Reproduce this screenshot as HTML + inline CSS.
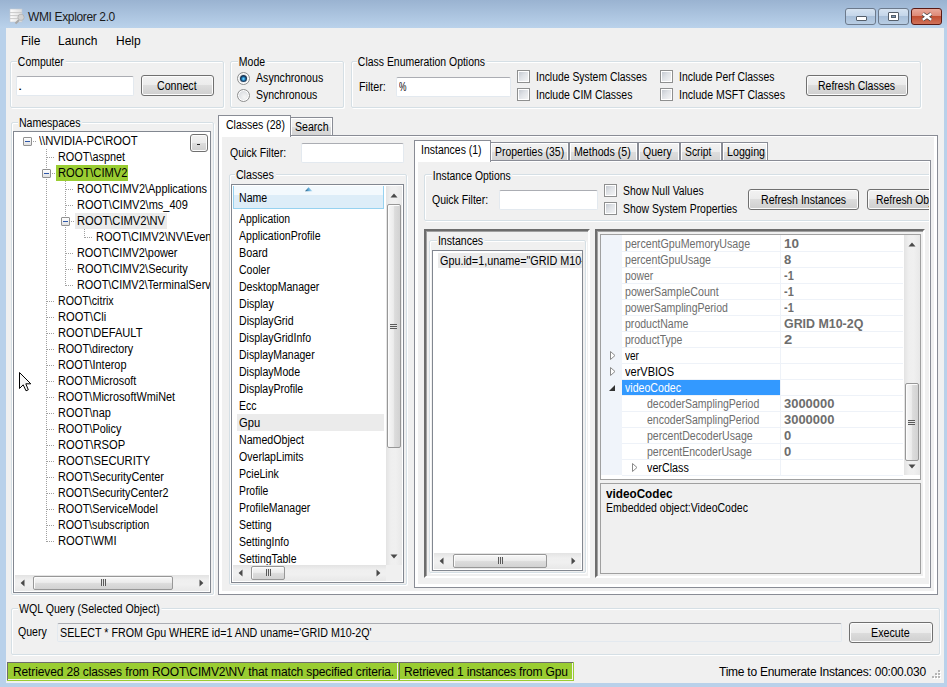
<!DOCTYPE html>
<html><head><meta charset="utf-8">
<style>
*{box-sizing:border-box;margin:0;padding:0}
html,body{width:947px;height:687px;overflow:hidden;background:#b9d1ea}
body{position:relative;font-family:"Liberation Sans",sans-serif;font-size:11px;color:#000}
.a{position:absolute}
.t{position:absolute;white-space:nowrap;line-height:13px}
.gb{position:absolute;border:1px solid #d5dfe5;border-radius:2px;box-shadow:inset 1px 1px 0 #fff,1px 1px 0 #fff}
.gl{position:absolute;background:#f0f0f0;padding:0 2px 0 1px;white-space:nowrap;line-height:13px}
.tb{position:absolute;background:#fff;border:1px solid #e3e9ef;border-top-color:#abadb3;border-radius:2px}
.btn{position:absolute;border:1px solid #707070;border-radius:3px;background:linear-gradient(#f2f2f2 0,#ebebeb 50%,#dddddd 50%,#cfcfcf 100%);box-shadow:inset 0 0 0 1px #fcfcfc}
.cb{position:absolute;width:13px;height:13px;border:1px solid #8e8f8f;background:linear-gradient(135deg,#bfc4cc,#dfe2e6 45%,#f7f7f7);box-shadow:inset 0 0 0 1px #fff}
.rd{position:absolute;width:13px;height:13px;border-radius:50%;border:1px solid #8e8f8f;background:radial-gradient(circle at 60% 65%,#f6f6f6 0,#e2e4e7 50%,#cdd0d4 100%);box-shadow:inset 0 0 0 1px #fff}
.sunk{position:absolute;border:1px solid #828790;background:#fff}
.tab{position:absolute;border:1px solid #898c95;border-bottom:none;background:linear-gradient(#f3f3f3 0,#ececec 50%,#dedede 50%,#d3d3d3 100%);box-shadow:inset 1px 1px 0 #fff,inset -1px 0 0 #fff}
</style></head><body>
<div class="a" style="left:0px;top:0px;width:947px;height:28px;background:linear-gradient(#9ab3d1,#bad2eb)"></div>
<div class="a" style="left:6px;top:28px;width:938px;height:655px;background:#f0f0f0"></div>
<svg class="a" style="left:9px;top:8px" width="16" height="17" viewBox="0 0 16 17">
<defs><linearGradient id="ig" x1="0" x2="1"><stop offset="0" stop-color="#fdfdfd"/><stop offset="1" stop-color="#dedede"/></linearGradient></defs>
<rect x="1" y="1" width="12" height="13" fill="url(#ig)" stroke="#c4cad2" stroke-width="0.6"/>
<path d="M1 4.6H13M1 7.6H13M1 10.6H13" stroke="#c9c9c9" stroke-width="1"/>
<path d="M10 12L6.5 15.5" stroke="#a8a8a8" stroke-width="2"/>
<circle cx="12" cy="9.3" r="3.1" fill="#d2d2d2" stroke="#b0b0b0" stroke-width="0.8"/></svg>
<div class="t" style="left:28px;top:10px;font-size:12px;line-height:14px;letter-spacing:-0.36px;color:#1a1a1a">WMI Explorer 2.0</div>
<div class="a" style="left:845px;top:8px;width:31px;height:17px;border:1px solid #6c7a8c;border-radius:3px;background:linear-gradient(#d6e3f1 0,#c4d6ea 45%,#a9c0da 50%,#b8cde3 100%)"></div>
<div class="a" style="left:878px;top:8px;width:31px;height:17px;border:1px solid #6c7a8c;border-radius:3px;background:linear-gradient(#d6e3f1 0,#c4d6ea 45%,#a9c0da 50%,#b8cde3 100%)"></div>
<div class="a" style="left:856px;top:16px;width:11px;height:5px;background:#fff;border:1px solid #555f6b;border-radius:1px"></div>
<div class="a" style="left:888px;top:12px;width:11px;height:9px;background:#fff;border:1px solid #555f6b;border-radius:1px"></div>
<div class="a" style="left:891px;top:15px;width:5px;height:3px;background:#7f9ab8;border:1px solid #555f6b"></div>
<div class="a" style="left:911px;top:8px;width:31px;height:17px;border:1px solid #5a1a14;border-radius:3px;background:linear-gradient(#e9a99a 0,#dd8a77 45%,#c14f32 50%,#d0715a 100%)"></div>
<svg class="a" style="left:919px;top:11px" width="16" height="12" viewBox="0 0 16 12"><path d="M3.8 2.8L12.2 8.8M12.2 2.8L3.8 8.8" stroke="#3d3d3d" stroke-width="3.8" fill="none"/><path d="M3.8 2.8L12.2 8.8M12.2 2.8L3.8 8.8" stroke="#fff" stroke-width="2.4" fill="none"/></svg>
<div class="t" style="left:21px;top:34px;font-size:12px;line-height:14px">File</div>
<div class="t" style="left:58px;top:34px;font-size:12px;line-height:14px">Launch</div>
<div class="t" style="left:116px;top:34px;font-size:12px;line-height:14px">Help</div>
<div class="gb" style="left:10px;top:61px;width:214px;height:47px;"></div>
<div class="gl" style="left:17.00px;top:55px;font-size:12px;line-height:14px;transform:scaleX(0.8701);transform-origin:0 0">Computer</div>
<div class="tb" style="left:16px;top:76px;width:118px;height:20px;"></div>
<div class="t" style="left:18.00px;top:79px;font-size:12px;line-height:14px;transform:scaleX(1.2770);transform-origin:0 0">.</div>
<div class="btn" style="left:141px;top:75px;width:73px;height:21px;"></div>
<div class="t" style="left:157.00px;top:79px;font-size:12px;line-height:14px;transform:scaleX(0.8864);transform-origin:0 0">Connect</div>
<div class="gb" style="left:230px;top:61px;width:114px;height:47px;"></div>
<div class="gl" style="left:238.00px;top:55px;font-size:12px;line-height:14px;transform:scaleX(0.8727);transform-origin:0 0">Mode</div>
<div class="rd" style="left:237px;top:72px;width:13px;height:13px;"></div>
<div class="rd" style="left:237px;top:89px;width:13px;height:13px;"></div>
<div class="a" style="left:240px;top:75px;width:7px;height:7px;border-radius:50%;background:radial-gradient(circle closest-side at 50% 55%,#8ee2ff 0,#2d9ad8 40%,#1a4b78 75%,#17324f 100%)"></div>
<div class="t" style="left:256.00px;top:71px;font-size:12px;line-height:14px;transform:scaleX(0.8839);transform-origin:0 0">Asynchronous</div>
<div class="t" style="left:256.00px;top:88px;font-size:12px;line-height:14px;transform:scaleX(0.8760);transform-origin:0 0">Synchronous</div>
<div class="gb" style="left:351px;top:61px;width:570px;height:47px;"></div>
<div class="gl" style="left:357.00px;top:55px;font-size:12px;line-height:14px;transform:scaleX(0.8704);transform-origin:0 0">Class Enumeration Options</div>
<div class="t" style="left:359.00px;top:80px;font-size:12px;line-height:14px;transform:scaleX(0.8948);transform-origin:0 0">Filter:</div>
<div class="tb" style="left:396px;top:77px;width:115px;height:20px;"></div>
<div class="t" style="left:399.00px;top:80px;font-size:12px;line-height:14px;transform:scaleX(0.7000);transform-origin:0 0">%</div>
<div class="cb" style="left:517px;top:70px;width:13px;height:13px;"></div>
<div class="t" style="left:536.00px;top:70px;font-size:12px;line-height:14px;transform:scaleX(0.8662);transform-origin:0 0">Include System Classes</div>
<div class="cb" style="left:517px;top:88px;width:13px;height:13px;"></div>
<div class="t" style="left:536.00px;top:88px;font-size:12px;line-height:14px;transform:scaleX(0.8767);transform-origin:0 0">Include CIM Classes</div>
<div class="cb" style="left:660px;top:70px;width:13px;height:13px;"></div>
<div class="t" style="left:679.00px;top:70px;font-size:12px;line-height:14px;transform:scaleX(0.8674);transform-origin:0 0">Include Perf Classes</div>
<div class="cb" style="left:660px;top:88px;width:13px;height:13px;"></div>
<div class="t" style="left:679.00px;top:88px;font-size:12px;line-height:14px;transform:scaleX(0.8796);transform-origin:0 0">Include MSFT Classes</div>
<div class="btn" style="left:806px;top:75px;width:102px;height:21px;"></div>
<div class="t" style="left:817.94px;top:79px;font-size:12px;line-height:14px;transform:scaleX(0.8750);transform-origin:0 0">Refresh Classes</div>
<div class="gb" style="left:11px;top:122px;width:203px;height:473px;"></div>
<div class="gl" style="left:18.00px;top:116px;font-size:12px;line-height:14px;transform:scaleX(0.8798);transform-origin:0 0">Namespaces</div>
<div class="sunk" style="left:13px;top:131px;width:198px;height:462px;overflow:hidden">
<div class="a" style="left:42px;top:33px;width:72px;height:16px;background:#9acd32"></div>
<div class="a" style="left:61px;top:81px;width:92px;height:16px;background:#ebebeb"></div>
<div class="a" style="left:32px;top:17px;width:1px;height:393px;background:repeating-linear-gradient(#a0a0a0 0 1px,transparent 1px 2px)"></div>
<div class="a" style="left:51px;top:49px;width:1px;height:105px;background:repeating-linear-gradient(#a0a0a0 0 1px,transparent 1px 2px)"></div>
<div class="a" style="left:70px;top:97px;width:1px;height:9px;background:repeating-linear-gradient(#a0a0a0 0 1px,transparent 1px 2px)"></div>
<div class="a" style="left:9px;top:5px;width:9px;height:9px;border:1px solid #919191;border-radius:1px;background:linear-gradient(#fff,#e0e0e0)"></div>
<div class="a" style="left:11px;top:9px;width:5px;height:1px;background:#2e57a8"></div>
<div class="a" style="left:19px;top:9px;width:4px;height:1px;background:repeating-linear-gradient(90deg,#a0a0a0 0 1px,transparent 1px 2px)"></div>
<div class="t" style="left:25.00px;top:2px;font-size:12px;line-height:14px;transform:scaleX(0.9373);transform-origin:0 0">\\NVIDIA-PC\ROOT</div>
<div class="a" style="left:33px;top:25px;width:8px;height:1px;background:repeating-linear-gradient(90deg,#a0a0a0 0 1px,transparent 1px 2px)"></div>
<div class="t" style="left:44.00px;top:18px;font-size:12px;line-height:14px;transform:scaleX(0.9057);transform-origin:0 0">ROOT\aspnet</div>
<div class="a" style="left:28px;top:37px;width:9px;height:9px;border:1px solid #919191;border-radius:1px;background:linear-gradient(#fff,#e0e0e0)"></div>
<div class="a" style="left:30px;top:41px;width:5px;height:1px;background:#2e57a8"></div>
<div class="a" style="left:38px;top:41px;width:4px;height:1px;background:repeating-linear-gradient(90deg,#a0a0a0 0 1px,transparent 1px 2px)"></div>
<div class="t" style="left:44.00px;top:34px;font-size:12px;line-height:14px;transform:scaleX(0.9305);transform-origin:0 0">ROOT\CIMV2</div>
<div class="a" style="left:52px;top:57px;width:8px;height:1px;background:repeating-linear-gradient(90deg,#a0a0a0 0 1px,transparent 1px 2px)"></div>
<div class="t" style="left:63.00px;top:50px;font-size:12px;line-height:14px;transform:scaleX(0.9105);transform-origin:0 0">ROOT\CIMV2\Applications</div>
<div class="a" style="left:52px;top:73px;width:8px;height:1px;background:repeating-linear-gradient(90deg,#a0a0a0 0 1px,transparent 1px 2px)"></div>
<div class="t" style="left:63.00px;top:66px;font-size:12px;line-height:14px;transform:scaleX(0.9184);transform-origin:0 0">ROOT\CIMV2\ms_409</div>
<div class="a" style="left:47px;top:85px;width:9px;height:9px;border:1px solid #919191;border-radius:1px;background:linear-gradient(#fff,#e0e0e0)"></div>
<div class="a" style="left:49px;top:89px;width:5px;height:1px;background:#2e57a8"></div>
<div class="a" style="left:57px;top:89px;width:4px;height:1px;background:repeating-linear-gradient(90deg,#a0a0a0 0 1px,transparent 1px 2px)"></div>
<div class="t" style="left:63.00px;top:82px;font-size:12px;line-height:14px;transform:scaleX(0.9300);transform-origin:0 0">ROOT\CIMV2\NV</div>
<div class="a" style="left:71px;top:105px;width:8px;height:1px;background:repeating-linear-gradient(90deg,#a0a0a0 0 1px,transparent 1px 2px)"></div>
<div class="t" style="left:82.00px;top:98px;font-size:12px;line-height:14px;transform:scaleX(0.9209);transform-origin:0 0">ROOT\CIMV2\NV\Events</div>
<div class="a" style="left:52px;top:121px;width:8px;height:1px;background:repeating-linear-gradient(90deg,#a0a0a0 0 1px,transparent 1px 2px)"></div>
<div class="t" style="left:63.00px;top:114px;font-size:12px;line-height:14px;transform:scaleX(0.9079);transform-origin:0 0">ROOT\CIMV2\power</div>
<div class="a" style="left:52px;top:137px;width:8px;height:1px;background:repeating-linear-gradient(90deg,#a0a0a0 0 1px,transparent 1px 2px)"></div>
<div class="t" style="left:63.00px;top:130px;font-size:12px;line-height:14px;transform:scaleX(0.9121);transform-origin:0 0">ROOT\CIMV2\Security</div>
<div class="a" style="left:52px;top:153px;width:8px;height:1px;background:repeating-linear-gradient(90deg,#a0a0a0 0 1px,transparent 1px 2px)"></div>
<div class="t" style="left:63.00px;top:146px;font-size:12px;line-height:14px;transform:scaleX(0.9029);transform-origin:0 0">ROOT\CIMV2\TerminalServices</div>
<div class="a" style="left:33px;top:169px;width:8px;height:1px;background:repeating-linear-gradient(90deg,#a0a0a0 0 1px,transparent 1px 2px)"></div>
<div class="t" style="left:44.00px;top:162px;font-size:12px;line-height:14px;transform:scaleX(0.8889);transform-origin:0 0">ROOT\citrix</div>
<div class="a" style="left:33px;top:185px;width:8px;height:1px;background:repeating-linear-gradient(90deg,#a0a0a0 0 1px,transparent 1px 2px)"></div>
<div class="t" style="left:44.00px;top:178px;font-size:12px;line-height:14px;transform:scaleX(0.9258);transform-origin:0 0">ROOT\Cli</div>
<div class="a" style="left:33px;top:201px;width:8px;height:1px;background:repeating-linear-gradient(90deg,#a0a0a0 0 1px,transparent 1px 2px)"></div>
<div class="t" style="left:44.00px;top:194px;font-size:12px;line-height:14px;transform:scaleX(0.9275);transform-origin:0 0">ROOT\DEFAULT</div>
<div class="a" style="left:33px;top:217px;width:8px;height:1px;background:repeating-linear-gradient(90deg,#a0a0a0 0 1px,transparent 1px 2px)"></div>
<div class="t" style="left:44.00px;top:210px;font-size:12px;line-height:14px;transform:scaleX(0.8953);transform-origin:0 0">ROOT\directory</div>
<div class="a" style="left:33px;top:233px;width:8px;height:1px;background:repeating-linear-gradient(90deg,#a0a0a0 0 1px,transparent 1px 2px)"></div>
<div class="t" style="left:44.00px;top:226px;font-size:12px;line-height:14px;transform:scaleX(0.9084);transform-origin:0 0">ROOT\Interop</div>
<div class="a" style="left:33px;top:249px;width:8px;height:1px;background:repeating-linear-gradient(90deg,#a0a0a0 0 1px,transparent 1px 2px)"></div>
<div class="t" style="left:44.00px;top:242px;font-size:12px;line-height:14px;transform:scaleX(0.9034);transform-origin:0 0">ROOT\Microsoft</div>
<div class="a" style="left:33px;top:265px;width:8px;height:1px;background:repeating-linear-gradient(90deg,#a0a0a0 0 1px,transparent 1px 2px)"></div>
<div class="t" style="left:44.00px;top:258px;font-size:12px;line-height:14px;transform:scaleX(0.9050);transform-origin:0 0">ROOT\MicrosoftWmiNet</div>
<div class="a" style="left:33px;top:281px;width:8px;height:1px;background:repeating-linear-gradient(90deg,#a0a0a0 0 1px,transparent 1px 2px)"></div>
<div class="t" style="left:44.00px;top:274px;font-size:12px;line-height:14px;transform:scaleX(0.9108);transform-origin:0 0">ROOT\nap</div>
<div class="a" style="left:33px;top:297px;width:8px;height:1px;background:repeating-linear-gradient(90deg,#a0a0a0 0 1px,transparent 1px 2px)"></div>
<div class="t" style="left:44.00px;top:290px;font-size:12px;line-height:14px;transform:scaleX(0.9056);transform-origin:0 0">ROOT\Policy</div>
<div class="a" style="left:33px;top:313px;width:8px;height:1px;background:repeating-linear-gradient(90deg,#a0a0a0 0 1px,transparent 1px 2px)"></div>
<div class="t" style="left:44.00px;top:306px;font-size:12px;line-height:14px;transform:scaleX(0.9317);transform-origin:0 0">ROOT\RSOP</div>
<div class="a" style="left:33px;top:329px;width:8px;height:1px;background:repeating-linear-gradient(90deg,#a0a0a0 0 1px,transparent 1px 2px)"></div>
<div class="t" style="left:44.00px;top:322px;font-size:12px;line-height:14px;transform:scaleX(0.9339);transform-origin:0 0">ROOT\SECURITY</div>
<div class="a" style="left:33px;top:345px;width:8px;height:1px;background:repeating-linear-gradient(90deg,#a0a0a0 0 1px,transparent 1px 2px)"></div>
<div class="t" style="left:44.00px;top:338px;font-size:12px;line-height:14px;transform:scaleX(0.9029);transform-origin:0 0">ROOT\SecurityCenter</div>
<div class="a" style="left:33px;top:361px;width:8px;height:1px;background:repeating-linear-gradient(90deg,#a0a0a0 0 1px,transparent 1px 2px)"></div>
<div class="t" style="left:44.00px;top:354px;font-size:12px;line-height:14px;transform:scaleX(0.8903);transform-origin:0 0">ROOT\SecurityCenter2</div>
<div class="a" style="left:33px;top:377px;width:8px;height:1px;background:repeating-linear-gradient(90deg,#a0a0a0 0 1px,transparent 1px 2px)"></div>
<div class="t" style="left:44.00px;top:370px;font-size:12px;line-height:14px;transform:scaleX(0.9015);transform-origin:0 0">ROOT\ServiceModel</div>
<div class="a" style="left:33px;top:393px;width:8px;height:1px;background:repeating-linear-gradient(90deg,#a0a0a0 0 1px,transparent 1px 2px)"></div>
<div class="t" style="left:44.00px;top:386px;font-size:12px;line-height:14px;transform:scaleX(0.8951);transform-origin:0 0">ROOT\subscription</div>
<div class="a" style="left:33px;top:409px;width:8px;height:1px;background:repeating-linear-gradient(90deg,#a0a0a0 0 1px,transparent 1px 2px)"></div>
<div class="t" style="left:44.00px;top:402px;font-size:12px;line-height:14px;transform:scaleX(0.9351);transform-origin:0 0">ROOT\WMI</div>
<div class="btn" style="left:176px;top:2px;width:18px;height:18px;"></div>
<div class="a" style="left:183px;top:12px;width:3px;height:1px;background:#202020"></div>
</div>
<div class="a" style="left:15px;top:575px;width:194px;height:16px;background:linear-gradient(#e3e3e3,#efefef 30%,#f0f0f0 60%,#e8e8e8)"></div>
<svg class="a" style="left:20px;top:579px" width="5" height="8"><path d="M4.5 0.5L0.6 4L4.5 7.5Z" fill="#4a4a4a"/></svg>
<svg class="a" style="left:199px;top:579px" width="5" height="8"><path d="M0.5 0.5L4.4 4L0.5 7.5Z" fill="#4a4a4a"/></svg>
<div class="a" style="left:33px;top:576px;width:140px;height:14px;border:1px solid #979797;border-radius:2px;background:linear-gradient(#f7f7f7,#ececec 45%,#dcdcdc 55%,#d2d2d2);box-shadow:inset 1px 1px 0 #fcfcfc"></div>
<div class="a" style="left:101px;top:579px;width:5px;height:7px;background:repeating-linear-gradient(90deg,#5a5a5a 0 1px,#e4e4e4 1px 2px)"></div>
<div class="tab" style="left:290px;top:117px;width:43px;height:19px;"></div>
<div class="t" style="left:295.00px;top:120px;font-size:12px;line-height:14px;transform:scaleX(0.8827);transform-origin:0 0">Search</div>
<div class="a" style="left:218px;top:135px;width:720px;height:460px;border:1px solid #898c95;background:#fff"></div>
<div class="a" style="left:222px;top:137px;width:712px;height:454px;background:#f0f0f0"></div>
<div class="a" style="left:218px;top:115px;width:73px;height:22px;border:1px solid #898c95;border-bottom:none;background:#fff"></div>
<div class="t" style="left:226.00px;top:118px;font-size:12px;line-height:14px;transform:scaleX(0.8747);transform-origin:0 0">Classes (28)</div>
<div class="t" style="left:230.00px;top:146px;font-size:12px;line-height:14px;transform:scaleX(0.8762);transform-origin:0 0">Quick Filter:</div>
<div class="tb" style="left:301px;top:143px;width:103px;height:20px;"></div>
<div class="gb" style="left:229px;top:174px;width:178px;height:411px;"></div>
<div class="gl" style="left:235.00px;top:168px;font-size:12px;line-height:14px;transform:scaleX(0.8905);transform-origin:0 0">Classes</div>
<div class="sunk" style="left:231px;top:184px;width:173px;height:399px;overflow:hidden">
<div class="a" style="left:1px;top:1px;width:151px;height:23px;border:1px solid #96d2f0;border-top:none;background:linear-gradient(#f3f9fd 0,#f3f9fd 41%,#ddedf8 41%,#ddedf8 100%)"></div>
<svg class="a" style="left:73px;top:2px" width="8" height="5"><defs><linearGradient id="sg" x1="0" x2="1"><stop offset="0" stop-color="#23506f"/><stop offset="0.45" stop-color="#5aa6d4"/><stop offset="1" stop-color="#bfe3f5"/></linearGradient></defs><path d="M0 4.2L3.6 0.2L7.5 4.2Z" fill="url(#sg)"/></svg>
<div class="t" style="left:7.00px;top:6px;font-size:12px;line-height:14px;transform:scaleX(0.8809);transform-origin:0 0">Name</div>
<div class="t" style="left:7.00px;top:27px;font-size:12px;line-height:14px;transform:scaleX(0.8697);transform-origin:0 0">Application</div>
<div class="t" style="left:7.00px;top:44px;font-size:12px;line-height:14px;transform:scaleX(0.8799);transform-origin:0 0">ApplicationProfile</div>
<div class="t" style="left:7.00px;top:61px;font-size:12px;line-height:14px;transform:scaleX(0.9014);transform-origin:0 0">Board</div>
<div class="t" style="left:7.00px;top:78px;font-size:12px;line-height:14px;transform:scaleX(0.8758);transform-origin:0 0">Cooler</div>
<div class="t" style="left:7.00px;top:95px;font-size:12px;line-height:14px;transform:scaleX(0.8793);transform-origin:0 0">DesktopManager</div>
<div class="t" style="left:7.00px;top:112px;font-size:12px;line-height:14px;transform:scaleX(0.8818);transform-origin:0 0">Display</div>
<div class="t" style="left:7.00px;top:129px;font-size:12px;line-height:14px;transform:scaleX(0.8803);transform-origin:0 0">DisplayGrid</div>
<div class="t" style="left:7.00px;top:146px;font-size:12px;line-height:14px;transform:scaleX(0.8781);transform-origin:0 0">DisplayGridInfo</div>
<div class="t" style="left:7.00px;top:163px;font-size:12px;line-height:14px;transform:scaleX(0.8723);transform-origin:0 0">DisplayManager</div>
<div class="t" style="left:7.00px;top:180px;font-size:12px;line-height:14px;transform:scaleX(0.8797);transform-origin:0 0">DisplayMode</div>
<div class="t" style="left:7.00px;top:197px;font-size:12px;line-height:14px;transform:scaleX(0.8753);transform-origin:0 0">DisplayProfile</div>
<div class="t" style="left:7.00px;top:214px;font-size:12px;line-height:14px;transform:scaleX(0.8724);transform-origin:0 0">Ecc</div>
<div class="a" style="left:5px;top:229px;width:147px;height:17px;background:#ebebeb"></div>
<div class="t" style="left:7.00px;top:231px;font-size:12px;line-height:14px;transform:scaleX(0.9322);transform-origin:0 0">Gpu</div>
<div class="t" style="left:7.00px;top:248px;font-size:12px;line-height:14px;transform:scaleX(0.8864);transform-origin:0 0">NamedObject</div>
<div class="t" style="left:7.00px;top:265px;font-size:12px;line-height:14px;transform:scaleX(0.8806);transform-origin:0 0">OverlapLimits</div>
<div class="t" style="left:7.00px;top:282px;font-size:12px;line-height:14px;transform:scaleX(0.8777);transform-origin:0 0">PcieLink</div>
<div class="t" style="left:7.00px;top:299px;font-size:12px;line-height:14px;transform:scaleX(0.8639);transform-origin:0 0">Profile</div>
<div class="t" style="left:7.00px;top:316px;font-size:12px;line-height:14px;transform:scaleX(0.8768);transform-origin:0 0">ProfileManager</div>
<div class="t" style="left:7.00px;top:333px;font-size:12px;line-height:14px;transform:scaleX(0.8753);transform-origin:0 0">Setting</div>
<div class="t" style="left:7.00px;top:350px;font-size:12px;line-height:14px;transform:scaleX(0.8718);transform-origin:0 0">SettingInfo</div>
<div class="t" style="left:7.00px;top:367px;font-size:12px;line-height:14px;transform:scaleX(0.8700);transform-origin:0 0">SettingTable</div>
</div>
<div class="a" style="left:386px;top:186px;width:16px;height:379px;background:linear-gradient(90deg,#e3e3e3,#efefef 30%,#f0f0f0 60%,#e8e8e8)"></div>
<svg class="a" style="left:390px;top:193px" width="8" height="5"><path d="M0.5 4.5L4 0.6L7.5 4.5Z" fill="#4a4a4a"/></svg>
<svg class="a" style="left:390px;top:554px" width="8" height="5"><path d="M0.5 0.5L4 4.4L7.5 0.5Z" fill="#4a4a4a"/></svg>
<div class="a" style="left:387px;top:204px;width:14px;height:244px;border:1px solid #979797;border-radius:2px;background:linear-gradient(90deg,#f7f7f7,#ececec 45%,#dcdcdc 55%,#d2d2d2);box-shadow:inset 1px 1px 0 #fcfcfc"></div>
<div class="a" style="left:390px;top:324px;width:7px;height:5px;background:repeating-linear-gradient(#5a5a5a 0 1px,#e4e4e4 1px 2px)"></div>
<div class="a" style="left:233px;top:565px;width:153px;height:16px;background:linear-gradient(#e3e3e3,#efefef 30%,#f0f0f0 60%,#e8e8e8)"></div>
<svg class="a" style="left:238px;top:569px" width="5" height="8"><path d="M4.5 0.5L0.6 4L4.5 7.5Z" fill="#4a4a4a"/></svg>
<svg class="a" style="left:376px;top:569px" width="5" height="8"><path d="M0.5 0.5L4.4 4L0.5 7.5Z" fill="#4a4a4a"/></svg>
<div class="a" style="left:251px;top:566px;width:34px;height:14px;border:1px solid #979797;border-radius:2px;background:linear-gradient(#f7f7f7,#ececec 45%,#dcdcdc 55%,#d2d2d2);box-shadow:inset 1px 1px 0 #fcfcfc"></div>
<div class="a" style="left:266px;top:569px;width:5px;height:7px;background:repeating-linear-gradient(90deg,#5a5a5a 0 1px,#e4e4e4 1px 2px)"></div>
<div class="a" style="left:386px;top:565px;width:16px;height:16px;background:#f0f0f0"></div>
<div class="tab" style="left:490px;top:142px;width:79px;height:19px;"></div>
<div class="t" style="left:495.00px;top:145px;font-size:12px;line-height:14px;transform:scaleX(0.8709);transform-origin:0 0">Properties (35)</div>
<div class="tab" style="left:569px;top:142px;width:69px;height:19px;"></div>
<div class="t" style="left:574.00px;top:145px;font-size:12px;line-height:14px;transform:scaleX(0.8863);transform-origin:0 0">Methods (5)</div>
<div class="tab" style="left:638px;top:142px;width:42px;height:19px;"></div>
<div class="t" style="left:643.00px;top:145px;font-size:12px;line-height:14px;transform:scaleX(0.8801);transform-origin:0 0">Query</div>
<div class="tab" style="left:680px;top:142px;width:42px;height:19px;"></div>
<div class="t" style="left:685.00px;top:145px;font-size:12px;line-height:14px;transform:scaleX(0.8592);transform-origin:0 0">Script</div>
<div class="tab" style="left:722px;top:142px;width:46px;height:19px;"></div>
<div class="t" style="left:727.00px;top:145px;font-size:12px;line-height:14px;transform:scaleX(0.8905);transform-origin:0 0">Logging</div>
<div class="a" style="left:414px;top:160px;width:517px;height:428px;border:1px solid #898c95;background:#fff"></div>
<div class="a" style="left:418px;top:162px;width:511px;height:422px;background:#f0f0f0"></div>
<div class="a" style="left:414px;top:140px;width:77px;height:22px;border:1px solid #898c95;border-bottom:none;background:#fff"></div>
<div class="t" style="left:421.00px;top:143px;font-size:12px;line-height:14px;transform:scaleX(0.8738);transform-origin:0 0">Instances (1)</div>
<div class="a" style="left:418px;top:162px;width:511px;height:70px;overflow:hidden">
<div class="gb" style="left:6px;top:12px;width:520px;height:47px;"></div>
</div>
<div class="gl" style="left:432.00px;top:169px;font-size:12px;line-height:14px;transform:scaleX(0.8636);transform-origin:0 0">Instance Options</div>
<div class="t" style="left:432.00px;top:193px;font-size:12px;line-height:14px;transform:scaleX(0.8762);transform-origin:0 0">Quick Filter:</div>
<div class="tb" style="left:499px;top:190px;width:99px;height:20px;"></div>
<div class="cb" style="left:604px;top:184px;width:13px;height:13px;"></div>
<div class="cb" style="left:604px;top:202px;width:13px;height:13px;"></div>
<div class="t" style="left:623.00px;top:184px;font-size:12px;line-height:14px;transform:scaleX(0.8653);transform-origin:0 0">Show Null Values</div>
<div class="t" style="left:623.00px;top:202px;font-size:12px;line-height:14px;transform:scaleX(0.8693);transform-origin:0 0">Show System Properties</div>
<div class="btn" style="left:748px;top:189px;width:111px;height:21px;"></div>
<div class="t" style="left:760.70px;top:193px;font-size:12px;line-height:14px;transform:scaleX(0.8799);transform-origin:0 0">Refresh Instances</div>
<div class="a" style="left:867px;top:189px;width:62px;height:22px;overflow:hidden">
<div class="btn" style="left:0px;top:0px;width:100px;height:21px;"></div>
<div class="t" style="left:9.00px;top:4px;font-size:12px;line-height:14px;transform:scaleX(0.8657);transform-origin:0 0">Refresh Object</div>
</div>
<div class="a" style="left:929px;top:162px;width:1px;height:422px;background:#fff"></div>
<div class="a" style="left:424px;top:229px;width:166px;height:349px;border:2px solid #6d6d6d;border-right-color:#fff;border-bottom-color:#fff;box-shadow:inset 1px 1px 0 #a0a0a0"></div>
<div class="gb" style="left:429px;top:240px;width:157px;height:333px;"></div>
<div class="gl" style="left:437.00px;top:234px;font-size:12px;line-height:14px;transform:scaleX(0.8795);transform-origin:0 0">Instances</div>
<div class="sunk" style="left:432px;top:250px;width:151px;height:321px;overflow:hidden">
<div class="a" style="left:5px;top:2px;width:144px;height:15px;background:#ebebeb"></div>
<div class="t" style="left:7.00px;top:3px;font-size:12px;line-height:14px;transform:scaleX(0.9000);transform-origin:0 0">Gpu.id=1,uname=&quot;GRID M10-2Q&quot;</div>
</div>
<div class="a" style="left:434px;top:553px;width:147px;height:16px;background:linear-gradient(#e3e3e3,#efefef 30%,#f0f0f0 60%,#e8e8e8)"></div>
<svg class="a" style="left:439px;top:557px" width="5" height="8"><path d="M4.5 0.5L0.6 4L4.5 7.5Z" fill="#4a4a4a"/></svg>
<svg class="a" style="left:571px;top:557px" width="5" height="8"><path d="M0.5 0.5L4.4 4L0.5 7.5Z" fill="#4a4a4a"/></svg>
<div class="a" style="left:453px;top:554px;width:94px;height:14px;border:1px solid #979797;border-radius:2px;background:linear-gradient(#f7f7f7,#ececec 45%,#dcdcdc 55%,#d2d2d2);box-shadow:inset 1px 1px 0 #fcfcfc"></div>
<div class="a" style="left:498px;top:557px;width:5px;height:7px;background:repeating-linear-gradient(90deg,#5a5a5a 0 1px,#e4e4e4 1px 2px)"></div>
<div class="a" style="left:595px;top:229px;width:330px;height:349px;border:2px solid #6d6d6d;border-right-color:#fff;border-bottom-color:#fff;box-shadow:inset 1px 1px 0 #a0a0a0"></div>
<div class="a" style="left:600px;top:234px;width:321px;height:246px;border:1px solid #a0a0a0;background:#fff;overflow:hidden">
<div class="a" style="left:0px;top:0px;width:21px;height:240px;background:#f0f4fa"></div>
<div class="a" style="left:21px;top:16px;width:281px;height:1px;background:#eef2f8"></div>
<div class="a" style="left:179px;top:0px;width:1px;height:16px;background:#eef2f8"></div>
<div class="t" style="left:24.00px;top:2px;font-size:12px;line-height:14px;transform:scaleX(0.8887);transform-origin:0 0;color:#6d6d6d">percentGpuMemoryUsage</div>
<div class="t" style="left:183.00px;top:2px;font-size:12px;line-height:14px;transform:scaleX(1.1250);transform-origin:0 0;color:#6d6d6d;font-weight:bold">10</div>
<div class="a" style="left:21px;top:32px;width:281px;height:1px;background:#eef2f8"></div>
<div class="a" style="left:179px;top:16px;width:1px;height:16px;background:#eef2f8"></div>
<div class="t" style="left:24.00px;top:18px;font-size:12px;line-height:14px;transform:scaleX(0.8828);transform-origin:0 0;color:#6d6d6d">percentGpuUsage</div>
<div class="t" style="left:183.00px;top:18px;font-size:12px;line-height:14px;transform:scaleX(1.0833);transform-origin:0 0;color:#6d6d6d;font-weight:bold">8</div>
<div class="a" style="left:21px;top:48px;width:281px;height:1px;background:#eef2f8"></div>
<div class="a" style="left:179px;top:32px;width:1px;height:16px;background:#eef2f8"></div>
<div class="t" style="left:24.00px;top:34px;font-size:12px;line-height:14px;transform:scaleX(0.8646);transform-origin:0 0;color:#6d6d6d">power</div>
<div class="t" style="left:183.00px;top:34px;font-size:12px;line-height:14px;transform:scaleX(0.9091);transform-origin:0 0;color:#6d6d6d;font-weight:bold">-1</div>
<div class="a" style="left:21px;top:64px;width:281px;height:1px;background:#eef2f8"></div>
<div class="a" style="left:179px;top:48px;width:1px;height:16px;background:#eef2f8"></div>
<div class="t" style="left:24.00px;top:50px;font-size:12px;line-height:14px;transform:scaleX(0.8893);transform-origin:0 0;color:#6d6d6d">powerSampleCount</div>
<div class="t" style="left:183.00px;top:50px;font-size:12px;line-height:14px;transform:scaleX(0.9091);transform-origin:0 0;color:#6d6d6d;font-weight:bold">-1</div>
<div class="a" style="left:21px;top:80px;width:281px;height:1px;background:#eef2f8"></div>
<div class="a" style="left:179px;top:64px;width:1px;height:16px;background:#eef2f8"></div>
<div class="t" style="left:24.00px;top:66px;font-size:12px;line-height:14px;transform:scaleX(0.8766);transform-origin:0 0;color:#6d6d6d">powerSamplingPeriod</div>
<div class="t" style="left:183.00px;top:66px;font-size:12px;line-height:14px;transform:scaleX(0.9091);transform-origin:0 0;color:#6d6d6d;font-weight:bold">-1</div>
<div class="a" style="left:21px;top:96px;width:281px;height:1px;background:#eef2f8"></div>
<div class="a" style="left:179px;top:80px;width:1px;height:16px;background:#eef2f8"></div>
<div class="t" style="left:24.00px;top:82px;font-size:12px;line-height:14px;transform:scaleX(0.8795);transform-origin:0 0;color:#6d6d6d">productName</div>
<div class="t" style="left:183.00px;top:82px;font-size:12px;line-height:14px;transform:scaleX(1.0342);transform-origin:0 0;color:#6d6d6d;font-weight:bold">GRID M10-2Q</div>
<div class="a" style="left:21px;top:112px;width:281px;height:1px;background:#eef2f8"></div>
<div class="a" style="left:179px;top:96px;width:1px;height:16px;background:#eef2f8"></div>
<div class="t" style="left:24.00px;top:98px;font-size:12px;line-height:14px;transform:scaleX(0.8684);transform-origin:0 0;color:#6d6d6d">productType</div>
<div class="t" style="left:183.00px;top:98px;font-size:12px;line-height:14px;transform:scaleX(1.2333);transform-origin:0 0;color:#6d6d6d;font-weight:bold">2</div>
<div class="a" style="left:21px;top:128px;width:281px;height:1px;background:#eef2f8"></div>
<div class="a" style="left:179px;top:112px;width:1px;height:16px;background:#eef2f8"></div>
<div class="t" style="left:24.00px;top:114px;font-size:12px;line-height:14px;transform:scaleX(0.8353);transform-origin:0 0;color:#000">ver</div>
<svg class="a" style="left:8px;top:116px" width="8" height="10"><path d="M1.5 0.5L6 4.5L1.5 8.5Z" fill="#fff" stroke="#8a8a8a"/></svg>
<div class="a" style="left:21px;top:144px;width:281px;height:1px;background:#eef2f8"></div>
<div class="a" style="left:179px;top:128px;width:1px;height:16px;background:#eef2f8"></div>
<div class="t" style="left:24.00px;top:130px;font-size:12px;line-height:14px;transform:scaleX(0.9197);transform-origin:0 0;color:#000">verVBIOS</div>
<svg class="a" style="left:8px;top:132px" width="8" height="10"><path d="M1.5 0.5L6 4.5L1.5 8.5Z" fill="#fff" stroke="#8a8a8a"/></svg>
<div class="a" style="left:21px;top:160px;width:281px;height:1px;background:#eef2f8"></div>
<div class="a" style="left:179px;top:144px;width:1px;height:16px;background:#eef2f8"></div>
<div class="a" style="left:21px;top:145px;width:158px;height:15px;background:#3399ff"></div>
<div class="t" style="left:24.00px;top:146px;font-size:12px;line-height:14px;transform:scaleX(0.8843);transform-origin:0 0;color:#fff">videoCodec</div>
<svg class="a" style="left:8px;top:150px" width="7" height="7"><path d="M6 0V6H0Z" fill="#333"/></svg>
<div class="a" style="left:21px;top:176px;width:281px;height:1px;background:#eef2f8"></div>
<div class="a" style="left:179px;top:160px;width:1px;height:16px;background:#eef2f8"></div>
<div class="t" style="left:46.00px;top:162px;font-size:12px;line-height:14px;transform:scaleX(0.8762);transform-origin:0 0;color:#6d6d6d">decoderSamplingPeriod</div>
<div class="t" style="left:183.00px;top:162px;font-size:12px;line-height:14px;transform:scaleX(1.0778);transform-origin:0 0;color:#6d6d6d;font-weight:bold">3000000</div>
<div class="a" style="left:21px;top:192px;width:281px;height:1px;background:#eef2f8"></div>
<div class="a" style="left:179px;top:176px;width:1px;height:16px;background:#eef2f8"></div>
<div class="t" style="left:46.00px;top:178px;font-size:12px;line-height:14px;transform:scaleX(0.8762);transform-origin:0 0;color:#6d6d6d">encoderSamplingPeriod</div>
<div class="t" style="left:183.00px;top:178px;font-size:12px;line-height:14px;transform:scaleX(1.0778);transform-origin:0 0;color:#6d6d6d;font-weight:bold">3000000</div>
<div class="a" style="left:21px;top:208px;width:281px;height:1px;background:#eef2f8"></div>
<div class="a" style="left:179px;top:192px;width:1px;height:16px;background:#eef2f8"></div>
<div class="t" style="left:46.00px;top:194px;font-size:12px;line-height:14px;transform:scaleX(0.8797);transform-origin:0 0;color:#6d6d6d">percentDecoderUsage</div>
<div class="t" style="left:183.00px;top:194px;font-size:12px;line-height:14px;transform:scaleX(1.0833);transform-origin:0 0;color:#6d6d6d;font-weight:bold">0</div>
<div class="a" style="left:21px;top:224px;width:281px;height:1px;background:#eef2f8"></div>
<div class="a" style="left:179px;top:208px;width:1px;height:16px;background:#eef2f8"></div>
<div class="t" style="left:46.00px;top:210px;font-size:12px;line-height:14px;transform:scaleX(0.8787);transform-origin:0 0;color:#6d6d6d">percentEncoderUsage</div>
<div class="t" style="left:183.00px;top:210px;font-size:12px;line-height:14px;transform:scaleX(1.0833);transform-origin:0 0;color:#6d6d6d;font-weight:bold">0</div>
<div class="a" style="left:21px;top:240px;width:281px;height:1px;background:#eef2f8"></div>
<div class="a" style="left:179px;top:224px;width:1px;height:16px;background:#eef2f8"></div>
<div class="t" style="left:46.00px;top:226px;font-size:12px;line-height:14px;transform:scaleX(0.8966);transform-origin:0 0;color:#000">verClass</div>
<svg class="a" style="left:30px;top:228px" width="8" height="10"><path d="M1.5 0.5L6 4.5L1.5 8.5Z" fill="#fff" stroke="#8a8a8a"/></svg>
</div>
<div class="a" style="left:904px;top:235px;width:16px;height:240px;background:linear-gradient(90deg,#e3e3e3,#efefef 30%,#f0f0f0 60%,#e8e8e8)"></div>
<svg class="a" style="left:908px;top:242px" width="8" height="5"><path d="M0.5 4.5L4 0.6L7.5 4.5Z" fill="#4a4a4a"/></svg>
<svg class="a" style="left:908px;top:464px" width="8" height="5"><path d="M0.5 0.5L4 4.4L7.5 0.5Z" fill="#4a4a4a"/></svg>
<div class="a" style="left:905px;top:383px;width:14px;height:78px;border:1px solid #979797;border-radius:2px;background:linear-gradient(90deg,#f7f7f7,#ececec 45%,#dcdcdc 55%,#d2d2d2);box-shadow:inset 1px 1px 0 #fcfcfc"></div>
<div class="a" style="left:908px;top:420px;width:7px;height:5px;background:repeating-linear-gradient(#5a5a5a 0 1px,#e4e4e4 1px 2px)"></div>
<div class="a" style="left:600px;top:483px;width:321px;height:91px;border:1px solid #a0a0a0;background:#f0f0f0"></div>
<div class="t" style="left:606.00px;top:487px;font-size:12px;line-height:14px;transform:scaleX(0.9779);transform-origin:0 0;font-weight:bold">videoCodec</div>
<div class="t" style="left:606.00px;top:501px;font-size:12px;line-height:14px;transform:scaleX(0.8765);transform-origin:0 0">Embedded object:VideoCodec</div>
<div class="gb" style="left:11px;top:608px;width:929px;height:47px;"></div>
<div class="gl" style="left:18.00px;top:602px;font-size:12px;line-height:14px;transform:scaleX(0.8861);transform-origin:0 0">WQL Query (Selected Object)</div>
<div class="t" style="left:18.00px;top:625px;font-size:12px;line-height:14px;transform:scaleX(0.8801);transform-origin:0 0">Query</div>
<div class="a" style="left:57px;top:623px;width:785px;height:19px;border:1px solid #e3e9ef;border-top-color:#abadb3;border-radius:2px;background:#f0f0f0"></div>
<div class="t" style="left:60.00px;top:626px;font-size:12px;line-height:14px;transform:scaleX(0.8908);transform-origin:0 0">SELECT * FROM Gpu WHERE id=1 AND uname=&#x27;GRID M10-2Q&#x27;</div>
<div class="btn" style="left:849px;top:622px;width:84px;height:21px;"></div>
<div class="t" style="left:871.25px;top:626px;font-size:12px;line-height:14px;transform:scaleX(0.8931);transform-origin:0 0">Execute</div>
<div class="a" style="left:7px;top:662px;width:392px;height:19px;background:#9acd32"></div>
<div class="a" style="left:7px;top:662px;width:391px;height:1px;background:#6d6d6d"></div>
<div class="a" style="left:7px;top:662px;width:1px;height:18px;background:#6d6d6d"></div>
<div class="a" style="left:8px;top:679px;width:390px;height:1px;background:#f4f0f4"></div>
<div class="a" style="left:397px;top:663px;width:1px;height:17px;background:#f4f0f4"></div>
<div class="a" style="left:399px;top:662px;width:175px;height:19px;background:#9acd32"></div>
<div class="a" style="left:399px;top:662px;width:174px;height:1px;background:#6d6d6d"></div>
<div class="a" style="left:399px;top:662px;width:1px;height:18px;background:#6d6d6d"></div>
<div class="a" style="left:400px;top:679px;width:173px;height:1px;background:#f4f0f4"></div>
<div class="a" style="left:572px;top:663px;width:1px;height:17px;background:#f4f0f4"></div>
<div class="t" style="left:13px;top:665px;font-size:12px;line-height:14px;letter-spacing:-0.12px">Retrieved 28 classes from ROOT\CIMV2\NV that match specified criteria.</div>
<div class="t" style="left:404px;top:665px;font-size:12px;line-height:14px;letter-spacing:-0.17px">Retrieved 1 instances from Gpu</div>
<div class="t" style="left:719px;top:665px;font-size:12px;line-height:14px;letter-spacing:-0.25px">Time to Enumerate Instances: 00:00.030</div>
<div class="a" style="left:938px;top:670px;width:2px;height:2px;background:#b5b5b5;box-shadow:1px 1px 0 #fff"></div>
<div class="a" style="left:935px;top:673px;width:2px;height:2px;background:#b5b5b5;box-shadow:1px 1px 0 #fff"></div>
<div class="a" style="left:938px;top:673px;width:2px;height:2px;background:#b5b5b5;box-shadow:1px 1px 0 #fff"></div>
<div class="a" style="left:932px;top:676px;width:2px;height:2px;background:#b5b5b5;box-shadow:1px 1px 0 #fff"></div>
<div class="a" style="left:935px;top:676px;width:2px;height:2px;background:#b5b5b5;box-shadow:1px 1px 0 #fff"></div>
<div class="a" style="left:938px;top:676px;width:2px;height:2px;background:#b5b5b5;box-shadow:1px 1px 0 #fff"></div>
<svg class="a" style="left:19px;top:372px" width="13" height="20" viewBox="0 0 13 20"><path d="M0.5 0.5V16.5L4.2 12.8L7 18.8L9.3 17.8L6.8 11.8H11.8Z" fill="#f6f6f6" stroke="#000" stroke-linejoin="miter"/></svg>
</body></html>
